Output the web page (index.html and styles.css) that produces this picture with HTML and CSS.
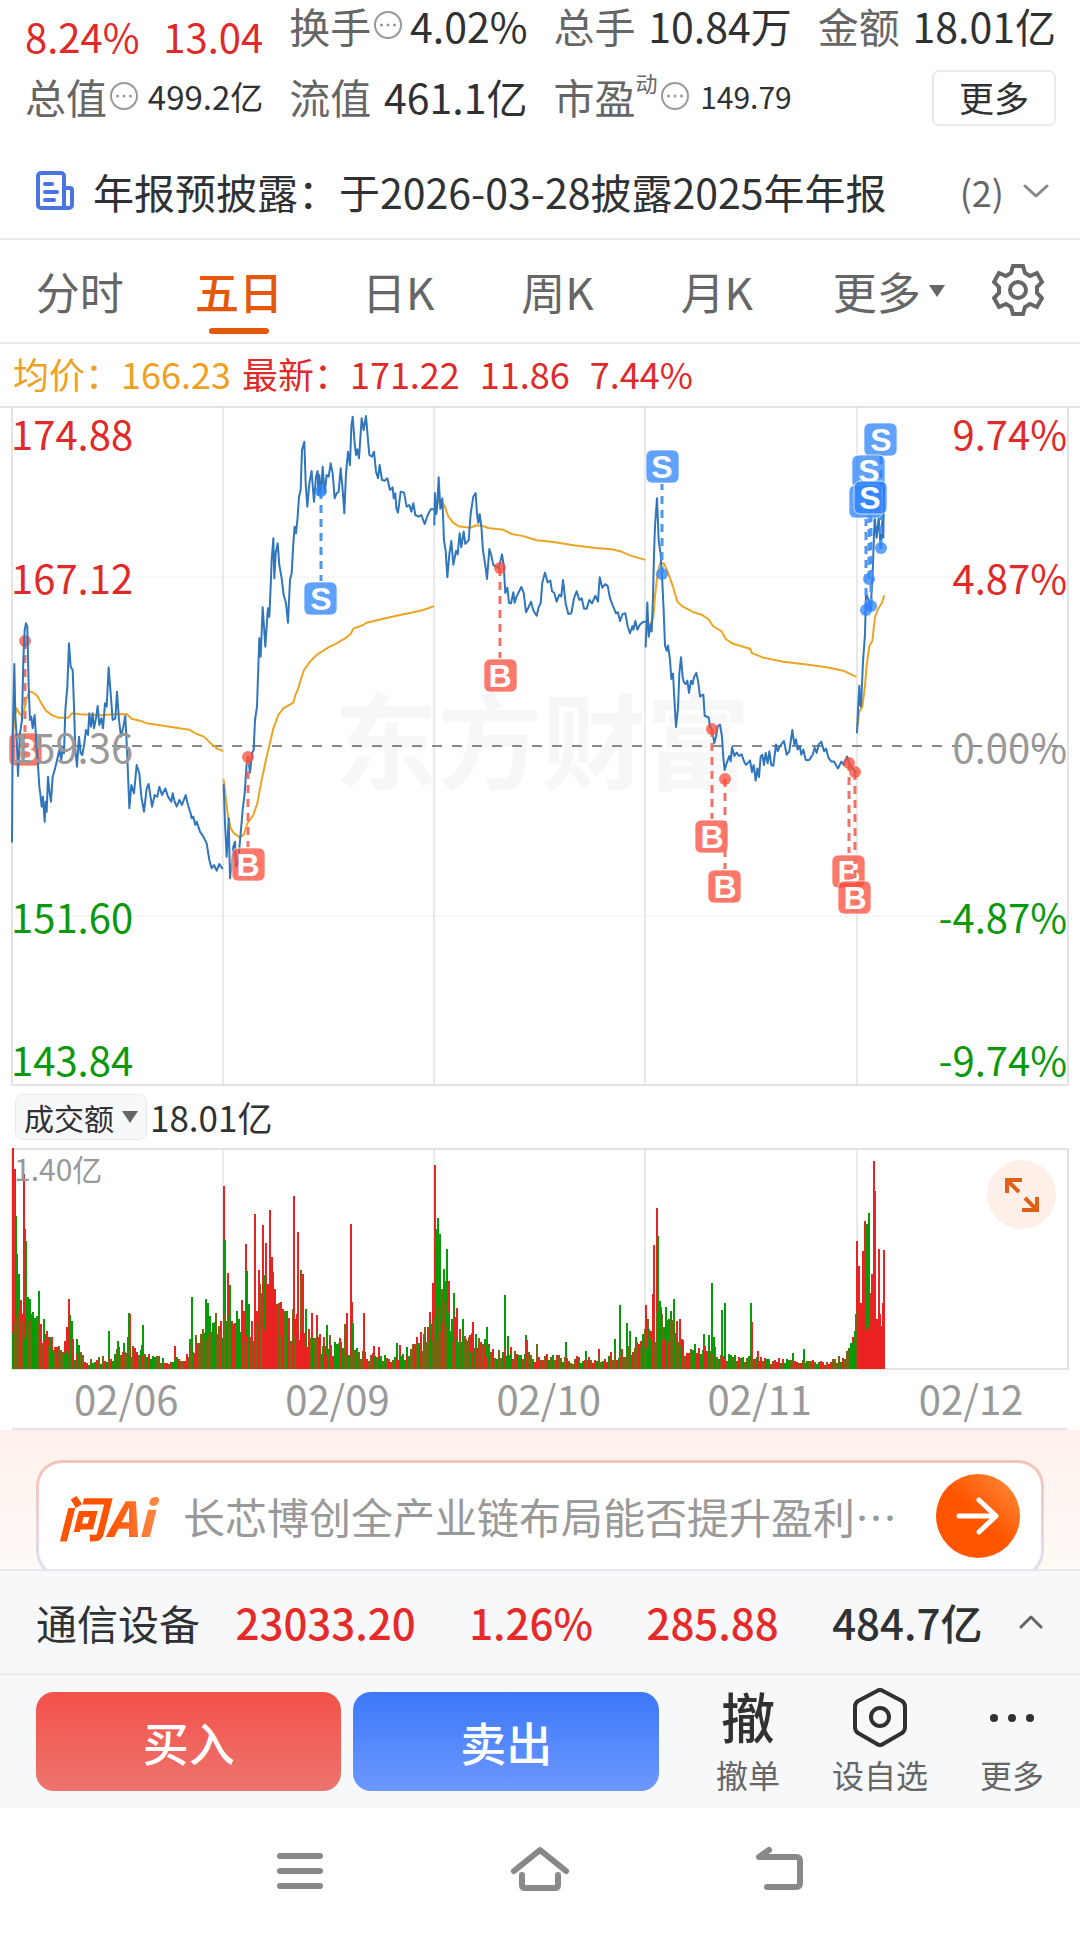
FILE: index.html
```html
<!DOCTYPE html>
<html lang="zh-CN">
<head>
<meta charset="utf-8">
<meta name="viewport" content="width=device-width, initial-scale=1">
<title>五日行情</title>
<link rel="stylesheet" href="styles.css">
</head>
<body>
<header class="stats">
  <div class="stat stat-change"><span>8.24%</span><span>13.04</span></div>
  <div class="stat"><span class="label">换手<svg class="hint" viewBox="0 0 30 30"><circle cx="15" cy="15" r="13"/><path d="M8.500 15h.01M15 15h.01M21.500 15h.01"/></svg></span><b>4.02%</b></div>
  <div class="stat"><span class="label">总手</span><b>10.84万</b></div>
  <div class="stat"><span class="label">金额</span><b>18.01亿</b></div>
  <div class="stat"><span class="label">总值<svg class="hint" viewBox="0 0 30 30"><circle cx="15" cy="15" r="13"/><path d="M8.500 15h.01M15 15h.01M21.500 15h.01"/></svg></span><b class="mid">499.2亿</b></div>
  <div class="stat"><span class="label">流值</span><b>461.1亿</b></div>
  <div class="stat"><span class="label">市盈<sup>动</sup><svg class="hint" viewBox="0 0 30 30"><circle cx="15" cy="15" r="13"/><path d="M8.500 15h.01M15 15h.01M21.500 15h.01"/></svg></span><b class="small">149.79</b></div>
  <div class="stat stat-more"><button class="more-btn" type="button">更多</button></div>
</header>

<a class="notice" href="#notice">
  <svg class="notice-icon" viewBox="0 0 38 40"><path d="M28 37H5a3 3 0 0 1-3-3V5a3 3 0 0 1 3-3h20a3 3 0 0 1 3 3v29a3 3 0 0 0 3 3h2a3 3 0 0 0 3-3V19a2 2 0 0 0-2-2h-6M9 13h7M9 21h12M9 29h9"/></svg>
  <span class="notice-text">年报预披露：于2026-03-28披露2025年年报</span>
  <span class="notice-count">(2)</span>
  <svg class="chev" viewBox="0 0 26 14"><path d="M2 2l11 10L24 2"/></svg>
</a>

<nav class="tabs">
  <a href="#min">分时</a>
  <a href="#five" class="on">五日</a>
  <a href="#day">日K</a>
  <a href="#week">周K</a>
  <a href="#month">月K</a>
  <a href="#more"><span>更多<svg class="tri" viewBox="0 0 16 12"><path d="M0 0h16L8 12z"/></svg></span></a>
  <button class="gear" type="button" aria-label="设置"><svg viewBox="0 0 52 54"><path d="M21 3h10l2 7 5 3 7-3 5 9-5 5v6l5 5-5 9-7-3-5 3-2 7H21l-2-7-5-3-7 3-5-9 5-5v-6l-5-5 5-9 7 3 5-3z"/><circle cx="26" cy="27" r="8"/></svg></button>
</nav>

<p class="legend"><span class="avg">均价：166.23</span><span>最新：171.22</span><span>11.86</span><span>7.44%</span></p>

<svg class="chart" viewBox="0 0 1080 680" role="img" aria-label="五日分时走势">
  <text class="watermark" x="334" y="376">东方财富</text>
  <g class="grid">
    <path d="M0 1H1080M12 1V679M1068 1V679M12 679H1068"/>
    <path class="sep" d="M223 1V679M434 1V679M645 1V679M857 1V679"/>
    <path class="dot" d="M12 171H1068M12 510H1068"/>
    <path class="zero" d="M12 340H1064"/>
  </g>
  <g class="mark buy"><path d="M25 235V326"/><circle cx="25" cy="235" r="6"/><rect x="9" y="327" width="33" height="33" rx="6"/><text x="25" y="355">B</text></g>
  <g class="average">
    <g transform="translate(0 -6) scale(.33333)">
      <polyline points="38,1020 44,950 50,925 58,940 66,948 72,935 78,900 88,874 100,878 112,888 124,910 138,932 155,945 175,953 205,953 215,940 240,943 300,946 340,943 380,942 395,956 420,962 440,970 500,979 568,989 590,1002 612,1010 630,1028 650,1045 667,1052"/>
      <polyline points="671,1140 677,1190 684,1250 692,1285 702,1300 720,1312 732,1303 742,1270 760,1245 772,1210 785,1140 800,1070 812,1020 820,985 835,945 850,925 880,908 886,885 895,865 902,840 912,810 930,785 950,765 985,742 1010,730 1040,712 1052,702 1060,686 1090,675 1100,668 1150,656 1200,645 1240,637 1270,630 1300,619"/>
    </g>
    <g transform="translate(420 -6) scale(.33333 .3508)">
      <polyline points="45,310 56,285 66,290 75,305 84,330 98,348 115,360 150,364 170,357 190,360 205,365 250,370 275,382 310,388 350,400 400,405 460,414 520,421 580,426 600,431 630,443 655,450 674,455"/>
      <polyline points="690,640 700,620 705,560 712,500 720,466 732,466 745,495 760,535 772,575 790,590 820,605 845,612 865,625 880,645 905,660 918,682 940,695 990,709"/>
    </g>
    <g transform="translate(700 -6) scale(.33333 .3444)">
      <polyline points="150,722 156,735 190,748 250,760 320,768 380,776 430,786 467,803"/>
      <polyline points="473,945 478,905 487,890 495,830 500,770 508,715 517,700 525,630 535,605 545,590 552,570"/>
    </g>
  </g>
  <g class="price">
    <g transform="translate(0 -6) scale(.33333)">
      <polyline points="36,1325 38,1010 43,792 46,950 50,1010 54,1128 60,1000 66,960 70,780 74,690 78,670 82,680 86,860 90,960 94,950 98,985 104,945 108,1010 113,1080 118,1160 122,1190 125,1220 129,1190 134,1265 137,1205 140,1235 144,1130 149,1180 153,1205 158,1130 164,1110 170,1085 178,1050 184,1080 188,1040 192,1060 196,930 202,860 207,730 212,800 218,810 222,920 226,1050 231,1100 237,1010 242,1060 247,1065 253,1030 258,990 264,1005 268,940 273,980 278,940 282,985 288,955 293,918 298,975 304,955 309,985 315,910 320,920 326,802 332,880 338,960 346,955 351,875 357,960 363,1010 370,980 376,948 382,1070 388,1225 394,1155 402,1180 410,1095 418,1120 424,1190 432,1235 440,1165 446,1152 456,1220 464,1185 472,1190 478,1160 486,1185 496,1165 504,1190 514,1205 518,1180 524,1205 530,1220 538,1200 546,1215 557,1185 564,1215 572,1240 575,1255 580,1250 586,1275 590,1265 600,1295 610,1310 620,1330 628,1380 635,1405 642,1395 650,1412 658,1392 667,1405"/>
      <polyline points="671,1155 675,1270 680,1370 684,1300 686,1255 690,1435 695,1400 700,1340 705,1325 708,1400 714,1390 722,1300 728,1230 734,1180 740,1090 744,1070 750,1118 756,1060 761,1050 765,960 771,920 775,800 778,715 782,770 788,622 792,680 796,740 802,650 804,625 808,650 812,560 815,480 820,415 823,535 827,460 833,430 838,495 845,535 851,585 858,610 864,668 870,540 875,520 880,430 884,380 888,400 893,350 897,290 902,270 906,150 913,125 917,250 922,320 928,250 935,213 939,270 942,305 948,230 953,213 955,285 958,225 963,290 968,200 974,280 980,225 986,230 992,190 998,220 1004,295 1010,280 1016,275 1022,205 1028,270 1033,340 1038,220 1044,155 1050,195 1054,80 1058,50 1064,130 1068,165 1072,148 1077,175 1085,55 1091,90 1098,48 1104,120 1108,165 1116,170 1122,155 1128,215 1134,235 1139,195 1146,240 1154,242 1162,235 1170,270 1178,262 1181,295 1186,280 1189,325 1194,338 1202,275 1212,278 1220,320 1228,315 1234,335 1240,310 1246,345 1256,350 1264,345 1274,372 1282,348 1292,328 1300,328"/>
    </g>
    <g transform="translate(420 -6) scale(.33333 .3508)">
      <polyline points="43,355 45,265 49,325 52,300 56,220 61,310 67,280 72,400 77,430 82,505 88,440 94,402 100,470 108,430 113,440 119,380 124,420 131,375 136,410 146,400 152,325 160,275 167,265 171,325 175,350 179,325 184,360 189,430 195,465 201,510 208,425 213,440 220,470 228,475 236,480 246,440 251,470 256,550 262,535 267,578 273,580 280,548 284,578 288,565 295,550 304,533 311,550 318,605 326,590 333,575 340,600 350,615 356,590 362,580 367,520 375,492 383,520 391,515 396,545 403,550 410,575 418,555 424,560 429,513 437,580 445,610 454,608 462,565 470,545 478,570 485,565 492,595 500,595 508,570 516,580 526,558 534,575 539,505 547,535 556,525 563,530 570,565 580,590 588,608 594,605 600,630 608,610 616,608 623,645 630,665 637,645 640,655 646,630 652,655 660,640 670,632 676,632"/>
      <polyline points="677,703 682,577 686,675 692,640 695,660 699,560 702,440 705,360 711,280 716,400 722,440 727,520 731,600 735,700 740,715 744,700 750,740 754,795 759,780 763,850 768,932 774,880 778,780 783,733 788,790 792,805 797,810 802,800 807,835 813,800 818,810 822,790 829,778 834,800 840,845 850,840 854,900 866,905 870,930 876,940 883,978 888,960 893,930 900,925 906,960 910,1020 914,1055 920,1035 928,1015 932,1030 936,990 943,1015 950,1005 958,1015 965,1010 972,1030 978,1040 990,1028"/>
    </g>
    <g transform="translate(700 -6) scale(.33333 .3444)">
      <polyline points="150,1047 156,1080 161,1060 167,1105 172,1070 177,1095 182,1035 187,1030 192,1060 197,1025 203,1055 208,1020 214,1060 220,1062 228,1000 233,1020 240,1005 252,990 260,1030 268,1020 277,958 283,1000 288,985 293,1015 299,1005 304,1030 310,1015 317,1045 328,1045 338,1030 344,1010 350,1025 356,1000 364,992 372,1020 378,1012 386,1040 394,1050 402,1050 414,1070 424,1050 432,1060 441,1035 448,1055 458,1070 467,1080"/>
      <polyline points="471,965 474,900 478,830 480,885 483,890 489,760 495,680 498,560 505,580 512,610 518,500 524,340 530,400 536,340 542,430 548,335 550,400 552,240"/>
    </g>
  </g>
  <g class="mark buy"><path d="M248 351V441"/><circle cx="248" cy="351" r="6"/><rect x="232" y="442" width="33" height="33" rx="6"/><text x="248" y="470">B</text></g>
  <g class="mark sell"><path d="M321 85V175"/><circle cx="321" cy="85" r="6"/><rect x="304" y="176" width="33" height="33" rx="6"/><text x="321" y="204">S</text></g>
  <g class="mark buy"><path d="M500 162V252"/><circle cx="500" cy="162" r="6"/><rect x="484" y="253" width="33" height="33" rx="6"/><text x="500" y="281">B</text></g>
  <g class="mark sell"><path d="M662 168V78"/><circle cx="662" cy="168" r="6"/><rect x="646" y="44" width="33" height="33" rx="6"/><text x="662" y="72">S</text></g>
  <g class="mark buy"><path d="M712 323V413"/><circle cx="712" cy="323" r="6"/><rect x="695" y="414" width="33" height="33" rx="6"/><text x="712" y="442">B</text></g>
  <g class="mark buy"><path d="M725 373V463"/><circle cx="725" cy="373" r="6"/><rect x="708" y="464" width="33" height="33" rx="6"/><text x="725" y="492">B</text></g>
  <g class="mark buy"><path d="M849 357V447"/><circle cx="849" cy="357" r="6"/><rect x="832" y="449" width="33" height="33" rx="6"/><text x="849" y="477">B</text></g>
  <g class="mark buy"><path d="M855 366V474"/><circle cx="855" cy="366" r="6"/><rect x="838" y="475" width="33" height="33" rx="6"/><text x="855" y="503">B</text></g>
  <g class="mark sell"><path d="M881 142V50"/><circle cx="881" cy="142" r="6"/><rect x="864" y="17" width="33" height="33" rx="6"/><text x="881" y="45">S</text></g>
  <g class="mark sell"><path d="M869 173V82"/><circle cx="869" cy="173" r="6"/><rect x="852" y="49" width="33" height="33" rx="6"/><text x="869" y="76">S</text></g>
  <g class="mark sell"><path d="M866 204V113"/><circle cx="866" cy="204" r="6"/><rect x="849" y="79" width="33" height="33" rx="6"/></g>
  <g class="mark sell"><path d="M871 200V109"/><circle cx="871" cy="200" r="6"/><rect x="854" y="75" width="33" height="33" rx="6"/><text x="870" y="103">S</text></g>
  <g class="scale">
    <text class="up" x="11" y="44">174.88</text><text class="up" x="11" y="188">167.12</text>
    <text class="flat" x="11" y="357">159.36</text>
    <text class="down" x="11" y="527">151.60</text><text class="down" x="11" y="670">143.84</text>
    <g class="right">
      <text class="up" x="1067" y="44">9.74%</text><text class="up" x="1067" y="188">4.87%</text>
      <text class="flat" x="1067" y="357">0.00%</text>
      <text class="down" x="1067" y="527">-4.87%</text><text class="down" x="1067" y="670">-9.74%</text>
    </g>
  </g>
</svg>

<div class="vol-head">
  <button class="vol-select" type="button">成交额<svg class="tri" viewBox="0 0 16 12"><path d="M0 0h16L8 12z"/></svg></button>
  <span>18.01亿</span>
</div>
<div class="vol">
  <svg class="chart" viewBox="0 0 1080 222" role="img" aria-label="成交额">
    <g class="grid"><path d="M12 1H1068M12 1V221M1068 1V221M12 221H1068"/><path class="sep" d="M223 1V221M434 1V221M645 1V221M857 1V221"/></g>
    <g id="bars"></g>
    <text class="vol-max" x="14" y="33">1.40亿</text>
  </svg>
  <button class="expand" type="button" aria-label="全屏"><svg viewBox="0 0 34 34"><path d="M2 15V2h15M2 2l12 12M32 19v13H17M32 32L20 20"/></svg></button>
</div>
<div class="dates"><span>02/06</span><span>02/09</span><span>02/10</span><span>02/11</span><span>02/12</span></div>

<section class="ask">
  <form class="ask-box">
    <label class="ask-logo" for="q">问Ai</label>
    <input id="q" type="text" placeholder="长芯博创全产业链布局能否提升盈利…">
    <button type="button" aria-label="提问"><svg viewBox="0 0 44 40"><path d="M3 20h36M23 4l17 16-17 16"/></svg></button>
  </form>
</section>

<footer>
  <a class="sector" href="#sector">
    <span class="name">通信设备</span><b class="up">23033.20</b><b class="up">1.26%</b><b class="up">285.88</b><b>484.7亿</b>
    <svg class="chev" viewBox="0 0 26 14"><path d="M3 12L13 2l10 10"/></svg>
  </a>
  <div class="actions">
    <button class="trade buy-btn" type="button">买入</button>
    <button class="trade sell-btn" type="button">卖出</button>
    <button class="act" type="button"><span class="act-icon">撤</span><span>撤单</span></button>
    <button class="act" type="button"><svg class="act-icon" viewBox="0 0 60 60"><path d="M27 4q3-2 6 0l19 10q3 2 3 6v20q0 4-3 6L33 57q-3 2-6 0L8 46q-3-2-3-6V20q0-4 3-6z"/><circle cx="30" cy="30" r="9"/></svg><span>设自选</span></button>
    <button class="act" type="button"><svg class="act-icon dots" viewBox="0 0 60 60"><circle cx="12" cy="31" r="4"/><circle cx="30" cy="31" r="4"/><circle cx="48" cy="31" r="4"/></svg><span>更多</span></button>
  </div>
  <nav class="system">
    <button type="button" aria-label="最近任务"><svg viewBox="0 0 60 48"><path d="M10 10h40M10 25h40M10 40h40"/></svg></button>
    <button type="button" aria-label="主页"><svg viewBox="0 0 60 48"><path d="M4 25L30 4l26 21M12 29v10q0 3 3 3h30q3 0 3-3V29"/></svg></button>
    <button type="button" aria-label="返回"><svg viewBox="0 0 60 48"><path d="M19 4L9 11h37q4 0 4 4v22q0 4-4 4H17"/></svg></button>
  </nav>
</footer>
<script src="script.js"></script>
</body>
</html>
```
FILE: styles.css
```css
* { box-sizing: border-box; }
body {
  margin: 0;
  background: #fff;
  color: #303133;
  font-family: "Noto Sans CJK SC", "Noto Sans", sans-serif;
  font-size: 40px;
}
button, input { font: inherit; color: inherit; border: 0; margin: 0; padding: 0; background: none; }
a { color: inherit; text-decoration: none; }
b { font-weight: 400; }
svg { display: block; fill: none; stroke-linecap: round; stroke-linejoin: round; }

.stats { display: grid; grid-template-columns: repeat(4, 1fr); column-gap: 26px; row-gap: 8px; padding: 0 24px 0 25px; }
.stat { display: flex; justify-content: space-between; align-items: center; height: 54px; line-height: 50px; padding-bottom: 4px; font-size: 41px; white-space: nowrap; }
.stat-change { height: 63px; padding: 9px 0 0; color: #e02a2a; font-size: 40px; }
.label { display: flex; align-items: center; color: #666; }
.label sup { align-self: flex-start; font-size: 22px; line-height: 22px; }
.hint { width: 30px; height: 30px; margin-left: 2px; stroke: #999; stroke-width: 2; }
.hint path { stroke-width: 3; }
.mid { font-size: 33px; }
.small { font-size: 30px; }
.stat-more { justify-content: flex-end; padding-bottom: 0; }
.more-btn { width: 124px; height: 56px; border: 2px solid #e8ebee; border-radius: 7px; padding-bottom: 3px; font-size: 35px; line-height: 48px; }

.notice { display: flex; align-items: center; margin-top: 38px; padding: 0 31px 19px 36px; border-bottom: 2px solid #e8e8e8; line-height: 56px; }
.notice-icon { width: 38px; height: 40px; margin-right: 19px; stroke: #4a74e0; stroke-width: 4; }
.notice-text { flex: 1; font-size: 41px; white-space: nowrap; }
.notice-count { margin-right: 19px; color: #666; font-size: 36px; }
.chev { width: 26px; height: 14px; stroke: #888; stroke-width: 3; }

.tabs { display: grid; grid-template-columns: repeat(5, 159fr) 184fr 74fr; padding: 23px 25px 8px 0; border-bottom: 2px solid #e8e8e8; color: #666; font-size: 44px; line-height: 56px; }
.tabs a { display: grid; justify-items: center; row-gap: 9px; }
.tabs a::after { content: ""; width: 60px; height: 6px; border-radius: 3px; }
.tabs .on { color: #e5570b; font-weight: 500; }
.tabs .on::after { background: #e5570b; }
.tabs a span { display: flex; align-items: center; gap: 8px; }
.tri { width: 16px; height: 12px; fill: #666; }
.gear { height: 54px; justify-self: center; }
.gear svg { width: 52px; height: 54px; stroke: #666; stroke-width: 4; stroke-linejoin: miter; }

.legend { display: flex; gap: 20px; margin: 0; padding: 0 13px 4px; color: #e02a2a; font-size: 36px; line-height: 58px; }
.legend .avg { margin-right: -9px; color: #f0a020; }

.chart { width: 100%; height: auto; overflow: visible; font-size: 40px; }
.grid { stroke: #e3e3e3; stroke-width: 2; }
.grid .sep { stroke: #d4d4d4; stroke-width: 1; }
.grid .dot { stroke-width: 1; stroke-dasharray: 1 3; }
.grid .zero { stroke: #888; stroke-dasharray: 10 10; stroke-linecap: butt; }
.watermark { fill: #f7f7f7; font-size: 104px; font-weight: 700; }
.average polyline, .price polyline { vector-effect: non-scaling-stroke; stroke-width: 2; }
.average { stroke: #eda423; }
.price { stroke: #3076bd; }
.mark path { stroke-width: 3; stroke-dasharray: 8 6; stroke-linecap: butt; }
.mark rect { stroke: #fff; stroke-width: 1; stroke-opacity: .7; }
.mark text { fill: #fff; font: 700 32px "Liberation Sans", sans-serif; text-anchor: middle; }
.buy path { stroke: #ee7265; }
.buy circle, .buy rect { fill: #fb4b38; fill-opacity: .75; }
.sell path { stroke: #4e96f4; }
.sell circle, .sell rect { fill: #2b82fb; fill-opacity: .75; }
.scale .up { fill: #e02a2a; }
.scale .flat { fill: #999; }
.scale .down { fill: #0c980c; }
.right { text-anchor: end; }

.vol-head { display: flex; align-items: center; gap: 3px; padding: 8px 15px; font-size: 35px; line-height: 46px; }
.vol-select { display: flex; align-items: center; gap: 8px; height: 46px; padding: 0 8px; border: 1px solid #e6e9ec; border-radius: 8px; background: #f6f8fa; font-size: 30px; line-height: 44px; }
.vol { position: relative; }
.vol-max { fill: #999; font-size: 30px; }
.r { fill: #ea2222; }
.g { fill: #079b07; }
.m { fill: #776611; }
.expand { position: absolute; top: 12px; right: 24px; width: 69px; height: 69px; border-radius: 50%; background: #fef0e9; display: grid; place-items: center; }
.expand svg { width: 34px; height: 34px; stroke: #e06018; stroke-width: 4; stroke-linecap: butt; stroke-linejoin: miter; }
.dates { display: grid; grid-template-columns: repeat(5, 1fr); margin: 0 12px; border-bottom: 2px solid #e3e3e3; color: #999; line-height: 56px; padding-bottom: 2px; }
.dates span { padding-left: 62px; }

.ask { overflow: hidden; padding: 30px 36px 0; background: linear-gradient(#fef1ed, #fffaf6); }
.ask-box { display: flex; align-items: center; height: 117px; margin-bottom: -8px; padding: 0 21px 6px 19px; border: 3px solid transparent; border-radius: 26px; background: linear-gradient(#fff, #fff) padding-box, linear-gradient(#f5c3b7, #dfe0f2) border-box; }
.ask-logo { padding-right: 6px; background: linear-gradient(90deg, #ff5200 50%, #ff8a4a); background-clip: text; color: transparent; font-size: 48px; font-style: italic; font-weight: 900; line-height: 60px; }
.ask-box input { flex: 1; min-width: 0; margin-left: 24px; font-size: 42px; outline: 0; }
.ask-box input::placeholder { color: #999; opacity: 1; }
.ask-box button { display: grid; place-items: center; width: 84px; height: 84px; border-radius: 50%; background: linear-gradient(45deg, #ff5500 50%, #ff9040); }
.ask-box button svg { width: 44px; height: 40px; stroke: #fff; stroke-width: 5; }

footer { background: #f6f8fa; }
.sector { display: flex; align-items: center; justify-content: space-between; padding: 22px 36px 22px; border-top: 2px solid #e3e6ea; border-bottom: 2px solid #e9ecef; font-size: 42px; line-height: 58px; }
.sector .name { margin-right: -18px; font-size: 41px; }
.sector b { font-weight: 500; }
.sector .up { color: #e62a2a; }
.sector .chev { margin-left: -18px; stroke: #666; }
.actions { display: flex; align-items: flex-start; padding: 17px 36px; }
.trade { flex: 305; height: 99px; padding-bottom: 2px; border-radius: 18px; color: #fff; font-size: 46px; font-weight: 500; }
.buy-btn { margin-right: 12px; background: linear-gradient(#f3524a, #ec746e); }
.sell-btn { margin-right: 57px; background: linear-gradient(#3c78f8, #6c98ff); }
.act { display: grid; justify-items: center; color: #666; font-size: 32px; line-height: 36px; row-gap: 9px; margin-top: -5px; height: 104px; white-space: nowrap; }
.act + .act { margin-left: 52px; }
.act-icon { width: 60px; height: 60px; color: #303133; stroke: #303133; stroke-width: 4; font-size: 54px; font-weight: 500; line-height: 58px; }
.act .dots { fill: #303133; stroke: none; }
.system { display: flex; justify-content: center; gap: 180px; padding: 38px 0 40px; background: #fff; }
.system svg { width: 60px; height: 48px; stroke: #888; stroke-width: 6; }
```
FILE: script.js
```js
// Turnover bars: [x, height, colour] peaks over a low, uneven base.
const peaks = `13,221,r 15,200,r 16,153,g 17,115,g 19,95,g 21,65,r 23,55,r 24,195,r 25,140,r 26,128,g 28,72,g 30,70,g 32,55,g 35,50,r 37,53,g 39,78,g 41,45,g 44,50,g 46,35,r 49,32,r 52,32,r 55,22,r 57,22,r 65,28,r 67,42,r 69,70,r 70,54,g 72,48,g 73,30,r 77,30,g 79,24,g 109,38,g 118,28,g 124,26,g 128,32,g 129,56,g 130,55,r 135,20,r 142,24,g 143,44,g 175,23,r 190,30,g 192,72,g 196,34,m 199,26,m 204,36,g 206,70,g 208,66,g 210,53,g 213,40,r 216,56,m 218,35,r
224,183,r 225,129,g 228,96,r 230,84,g 232,48,r 234,45,r 238,48,r 242,69,r 244,58,r 246,125,r 247,98,g 249,50,g 252,48,r 255,155,r 257,58,r 259,99,r 260,85,m 263,144,r 264,94,g 266,126,r 268,85,r 270,159,r 272,112,r 273,97,r 275,80,r 277,65,r 279,60,r 281,67,r 284,54,r 288,51,g 293,60,m 294,173,r 296,50,r 298,137,r 301,99,m 303,95,r 306,60,g 309,40,r 312,56,r 317,54,r 320,35,r 324,32,r 327,44,g 330,34,m 340,31,r 345,45,m 347,56,r 351,145,r 352,67,r 353,46,g 364,56,r 374,23,r 379,22,r 397,26,g 400,24,r 407,22,g 417,32,r 424,35,g 428,42,r 430,57,r
433,86,r 435,204,r 436,140,g 438,151,g 440,135,g 442,80,m 444,100,g 446,88,m 447,120,g 449,88,r 452,50,g 454,76,g 457,61,r 460,40,r 463,50,g 466,30,r 470,34,r 472,36,g 473,47,r 476,35,g 485,30,g 487,42,g 489,25,r 505,74,g 508,33,g 511,22,r 526,34,g 527,29,r 537,25,m 566,27,g 586,18,g 599,20,r 615,30,g 620,64,g 622,20,r 627,46,g 630,38,g 636,32,g 639,22,r 641,28,r
646,64,r 648,50,m 651,38,r 653,75,r 654,124,r 657,161,r 658,133,g 660,68,g 662,55,m 664,42,g 666,62,g 669,50,g 671,58,g 674,70,g 677,48,r 680,50,r 682,30,g 704,35,g 709,34,g 712,86,g 714,32,g 722,59,g 725,66,g 751,66,g 752,47,r 758,18,r 793,16,g 804,20,g 849,21,g 853,32,r
856,55,g 857,128,r 859,103,r 861,66,r 863,118,r 865,148,r 866,80,r 867,145,g 869,156,g 870,76,r 872,95,r 874,208,r 875,178,r 877,50,r 879,120,r 880,55,r 882,43,r 883,66,r 884,119,r`
  .split(/\s+/).map(p => p.split(','));

const base = [[12,60],[22,50],[34,38],[45,28],[55,16],[66,16],[80,12],[86,7],[110,10],[122,18],[145,12],[165,8],[185,11],[192,26],[208,28],[222,38],[240,42],[252,46],[262,62],[274,56],[284,42],[306,34],[318,24],[340,18],[356,14],[390,9],[405,14],[422,26],[432,44],[448,50],[458,30],[478,24],[484,16],[510,14],[540,11],[570,9],[600,9],[620,15],[640,24],[652,44],[668,44],[680,22],[705,16],[722,14],[740,10],[770,8],[800,6],[835,7],[848,14],[856,44],[884,44]];

let seed = 7;
const rand = () => (seed = (seed * 16807) % 2147483647) / 2147483647;
const level = x => {
  const i = Math.max(1, base.findIndex(p => p[0] >= x));
  const [x0, y0] = base[i - 1], [x1, y1] = base[i];
  return y0 + (y1 - y0) * (x - x0) / (x1 - x0);
};
const bar = (x, h, c, w) => `<rect class="${c}" x="${x}" y="${221 - h}" width="${w}" height="${h}"/>`;

let out = peaks.map(([x, h, c]) => bar(x - 1, h, c, 2)).join('');
for (let x = 12; x < 884; x += 2) {
  const h = Math.round(level(x) * (.6 + rand() * .9));
  const warm = (x > 235 && x < 320) || x > 856;
  const c = rand() < (warm ? .65 : .25) ? 'r' : rand() < .5 ? 'g' : 'm';
  out += bar(x, h, c, 2);
}
document.getElementById('bars').innerHTML = out;
```
